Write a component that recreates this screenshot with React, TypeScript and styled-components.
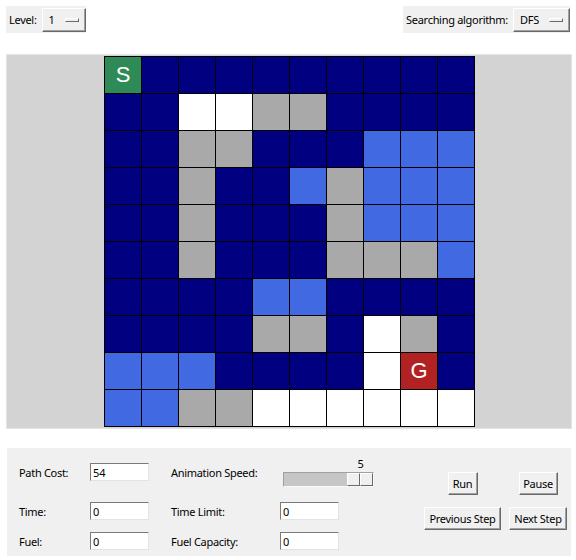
import React from "react";
import styled, { createGlobalStyle } from "styled-components";

const Global = createGlobalStyle`
  html, body { margin: 0; padding: 0; background: #ffffff; }
  body { font-family: "Noto Sans", "DejaVu Sans", sans-serif; font-size: 11px; letter-spacing: -0.3px; color: #000; }
  * { box-sizing: border-box; }
`;

const Page = styled.div`
  width: 576px;
  height: 560px;
  display: flex;
  flex-direction: column;
`;

const TopBar = styled.div`
  display: flex;
  justify-content: space-between;
  padding: 6px 6px 0 6px;
`;

const Frame = styled.div`
  display: flex;
  align-items: center;
  gap: 5px;
  height: 27px;
  padding: 0 0 0 3px;
  background: #f0f0f0;
`;

const Label = styled.span`
  font-family: "Noto Sans", sans-serif;
  font-size: 11px;
  letter-spacing: -0.3px;
  white-space: nowrap;
`;

const MenuButton = styled.div<{ $w: number }>`
  width: ${(p) => p.$w}px;
  height: 24px;
  display: flex;
  align-items: center;
  justify-content: space-between;
  padding: 0 6px 0 6px;
  background: #f0f0f0;
  border: 1px solid;
  border-color: #ffffff #696969 #696969 #ffffff;
  box-shadow: inset -1px -1px 0 #a0a0a0;
  font-size: 11px;
`;

const Indicator = styled.span`
  width: 14px;
  height: 4px;
  border: 1px solid;
  border-color: #ffffff #696969 #696969 #ffffff;
  background: #f0f0f0;
`;

const Canvas = styled.div`
  margin: 21px 4px 0 6px;
  height: 375px;
  border: 1px solid #e4e4e4;
  background: #d3d3d3;
  display: flex;
  justify-content: center;
  padding-top: 1px;
`;

const Grid = styled.div`
  display: grid;
  grid-template-columns: repeat(10, 37px);
  grid-template-rows: repeat(10, 37px);
  width: 371px;
  height: 371px;
  border-top: 1px solid #000;
  border-left: 1px solid #000;
  margin-left: 1px;
`;

const Cell = styled.div<{ $c: string }>`
  background: ${(p) => p.$c};
  border-right: 1px solid #000;
  border-bottom: 1px solid #000;
  display: flex;
  align-items: center;
  justify-content: center;
  color: #ffffff;
  font-family: "Liberation Sans", Arial, sans-serif;
  font-size: 22px;
  letter-spacing: 0;
  line-height: 1;
`;

const Panel = styled.div`
  margin: 19px 5px 0 7px;
  height: 108px;
  background: #f0f0f0;
  display: flex;
  padding: 4px 4px 0 12px;
`;

const Form = styled.div`
  display: grid;
  grid-template-columns: 71px 81px 109px auto;
  grid-template-rows: 40px 38px 22px;
  align-items: center;
`;

const Entry = styled.input`
  width: 59px;
  height: 18px;
  padding: 0 0 0 2px;
  margin: 0;
  border: 1px solid;
  border-color: #7a7a7a #e3e3e3 #e3e3e3 #7a7a7a;
  background: #ffffff;
  font-family: "Noto Sans", sans-serif;
  font-size: 11px;
  color: #000;
  outline: none;
`;

const SliderBox = styled.div`
  display: flex;
  flex-direction: column;
  margin-left: 3px;
  width: 91px;
`;

const SliderValue = styled.div`
  width: 27px;
  text-align: center;
  font-size: 11px;
  line-height: 13px;
  height: 15px;
`;

const Trough = styled.div`
  width: 91px;
  height: 15px;
  background: #c6c6c6;
  border: 1px solid;
  border-color: #a0a0a0 #f8f8f8 #f8f8f8 #a0a0a0;
  display: flex;
  justify-content: flex-start;
`;

const Handle = styled.div`
  width: 13px;
  height: 13px;
  background: #f0f0f0;
  border: 1px solid;
  border-color: #ffffff #696969 #696969 #ffffff;
`;

const Buttons = styled.div`
  margin-left: auto;
  margin-top: 20px;
  display: grid;
  grid-template-columns: 77px 58px;
  column-gap: 8px;
  row-gap: 12px;
  justify-items: center;
  align-self: flex-start;
`;

const Button = styled.button<{ $w: number }>`
  width: ${(p) => p.$w}px;
  height: 23px;
  padding: 0;
  background: #f0f0f0;
  border: 1px solid;
  border-color: #ffffff #696969 #696969 #ffffff;
  box-shadow: inset -1px -1px 0 #a0a0a0;
  font-family: "Noto Sans", sans-serif;
  font-size: 11px;
  letter-spacing: -0.3px;
  color: #000;
`;

const COLORS: Record<string, string> = {
  N: "#000080",
  W: "#ffffff",
  Y: "#a9a9a9",
  B: "#4169e1",
  S: "#2e8b57",
  G: "#b22222",
};

const MAP = [
  "SNNNNNNNNN",
  "NNWWYYNNNN",
  "NNYYNNNBBB",
  "NNYNNBYBBB",
  "NNYNNNYBBB",
  "NNYNNNYYYB",
  "NNNNBBNNNN",
  "NNNNYYNWYN",
  "BBBNNNNWGN",
  "BBYYWWWWWW",
];

const speed = 5;
const speedMin = 1;
const speedMax = 5;

export default function App() {
  const handlePos = ((speed - speedMin) / (speedMax - speedMin)) * (91 - 2 - 26);
  return (
    <Page>
      <Global />
      <TopBar>
        <Frame>
          <Label>Level:</Label>
          <MenuButton $w={44}>
            <span>1</span>
            <Indicator />
          </MenuButton>
        </Frame>
        <Frame>
          <Label>Searching algorithm:</Label>
          <MenuButton $w={57}>
            <span>DFS</span>
            <Indicator />
          </MenuButton>
        </Frame>
      </TopBar>
      <Canvas>
        <Grid>
          {MAP.flatMap((row, r) =>
            row.split("").map((ch, c) => (
              <Cell key={`${r}-${c}`} $c={COLORS[ch]}>
                {ch === "S" ? "S" : ch === "G" ? "G" : null}
              </Cell>
            ))
          )}
        </Grid>
      </Canvas>
      <Panel>
        <Form>
          <Label>Path Cost:</Label>
          <Entry defaultValue="54" readOnly />
          <Label>Animation Speed:</Label>
          <SliderBox>
            <SliderValue style={{ marginLeft: handlePos + 1 }}>{speed}</SliderValue>
            <Trough>
              <div style={{ width: handlePos }} />
              <Handle />
              <Handle />
            </Trough>
          </SliderBox>
          <Label>Time:</Label>
          <Entry defaultValue="0" readOnly />
          <Label>Time Limit:</Label>
          <Entry defaultValue="0" readOnly />
          <Label>Fuel:</Label>
          <Entry defaultValue="0" readOnly />
          <Label>Fuel Capacity:</Label>
          <Entry defaultValue="0" readOnly />
        </Form>
        <Buttons>
          <Button $w={30}>Run</Button>
          <Button $w={39}>Pause</Button>
          <Button $w={77}>Previous Step</Button>
          <Button $w={58}>Next Step</Button>
        </Buttons>
      </Panel>
    </Page>
  );
}
